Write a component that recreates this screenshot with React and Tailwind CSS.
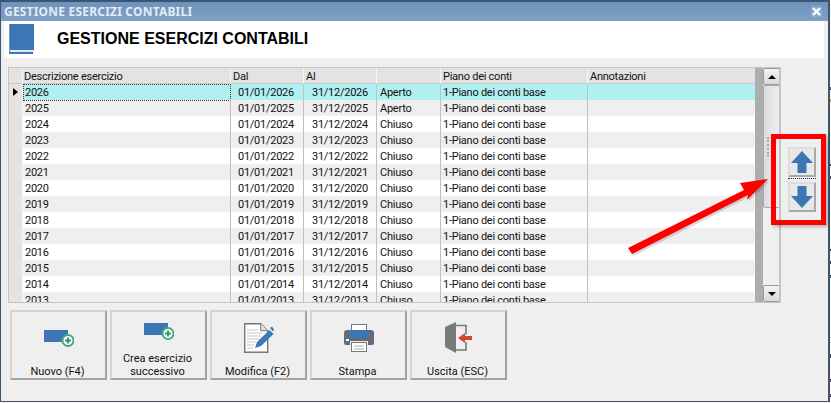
import React from 'react';

const font = { fontFamily: 'Roboto, Tahoma, sans-serif' };

const rows = [
  ['2026', '2026', 'Aperto'],
  ['2025', '2025', 'Aperto'],
  ['2024', '2024', 'Chiuso'],
  ['2023', '2023', 'Chiuso'],
  ['2022', '2022', 'Chiuso'],
  ['2021', '2021', 'Chiuso'],
  ['2020', '2020', 'Chiuso'],
  ['2019', '2019', 'Chiuso'],
  ['2018', '2018', 'Chiuso'],
  ['2017', '2017', 'Chiuso'],
  ['2016', '2016', 'Chiuso'],
  ['2015', '2015', 'Chiuso'],
  ['2014', '2014', 'Chiuso'],
  ['2013', '2013', 'Chiuso'],
];

// bits of the window behind that show past the right edge
const specks = [
  'top-[87px] h-[3px] bg-[#5a3a7a]',
  'top-[99px] h-[3px] bg-[#e0a040]',
  'top-[164px] h-[2px] bg-[#333]',
  'top-[176px] h-[3px] bg-[#2a5a8a]',
  'top-[249px] h-[2px] bg-[#333]',
  'top-[261px] h-[3px] bg-[#5a3a7a]',
  'top-[275px] h-[3px] bg-[#2a6aa8]',
  'top-[337px] h-[1px] bg-[#bbb]',
  'top-[342px] h-[1px] bg-[#bbb]',
  'top-[354px] h-[4px] bg-[#5a3a7a]',
  'top-[379px] h-[3px] bg-[#7a3a7a]',
  'top-[394px] h-[3px] bg-[#7a3a7a]',
];

const BookIcon = () => (
  <svg width="25" height="30" viewBox="0 0 25 30">
    <rect x="0" y="0" width="25" height="30" fill="#dfe7f1" />
    <rect x="1" y="0" width="24" height="26" fill="#3c76b5" />
    <rect x="0" y="0" width="1" height="30" fill="#6f9ac8" />
    <rect x="0" y="28" width="24" height="2" fill="#3c76b5" />
  </svg>
);

const NewIcon = () => (
  <svg width="30" height="17" viewBox="0 0 30 17">
    <rect x="0" y="0" width="24" height="12" fill="#3c76b5" />
    <circle cx="24" cy="10.5" r="5.5" fill="#fff" stroke="#4aa884" strokeWidth="2" />
    <path d="M24 7.5v6M21 10.5h6" stroke="#2f9a72" strokeWidth="2.2" />
  </svg>
);

const EditIcon = () => (
  <svg width="30" height="30" viewBox="0 0 30 30">
    <path d="M0.7 0.7h16l7 7v21.6h-23z" fill="#fff" stroke="#777" strokeWidth="1.4" />
    <path d="M16.7 0.7v7h7" fill="#e4e4e4" stroke="#777" />
    <path d="M3 7h11M3 10h15M3 13h15M3 16h13M3 19h9M3 22h7M3 25h6" stroke="#c6c6c6" />
    <path d="M11 25l2-6L25.500 7l4 4-12.500 12z" fill="#3c76b5" />
    <path d="M26 5l2-1.500 2 3-1 2z" fill="#3c76b5" />
  </svg>
);

const PrinterIcon = () => (
  <svg width="30" height="28" viewBox="0 0 30 28">
    <rect x="7.500" y="0.500" width="15" height="9" fill="#fff" stroke="#777" />
    <path d="M3 6h24a3 3 0 0 1 3 3v10a2 2 0 0 1-2 2h-4v-4H6v4H2a2 2 0 0 1-2-2V9a3 3 0 0 1 3-3z" fill="#666b73" />
    <rect x="5" y="6" width="20" height="8" fill="#3c76b5" />
    <rect x="2" y="15" width="3" height="2" fill="#fff" />
    <rect x="7.500" y="18.500" width="15" height="9" fill="#fff" stroke="#777" />
    <path d="M10 22h10M10 25h10" stroke="#aaa" />
  </svg>
);

const ExitIcon = () => (
  <svg width="27" height="31" viewBox="0 0 27 31">
    <path d="M0 5l11-5v31L0 25z" fill="#7a7a7a" />
    <path d="M11 3.500h10v9M21 20v8H11" fill="none" stroke="#7a7a7a" strokeWidth="1.6" />
    <path d="M13 16l7-5v3h7v4h-7v3z" fill="#d4492f" />
  </svg>
);

const ToolButton = ({ icon, lines, top }) => (
  <button className="w-[97px] h-[70px] bg-[#efefef] border-2 border-t-[#d2d2d2] border-l-[#d2d2d2] border-r-[#a2a2a2] border-b-[#a2a2a2] flex flex-col items-center text-[11px] leading-[13px] text-[#111] pr-[2px]">
    <div className={top}>{icon}</div>
    <div className="mt-auto">
      {lines.map((l) => (
        <div key={l}>{l}</div>
      ))}
    </div>
  </button>
);

const MoveButton = ({ down }) => (
  <div className="w-[28px] h-[30px] bg-[#e8e8e8] border-2 border-t-[#dcdcdc] border-l-[#dcdcdc] border-r-[#a8a8a8] border-b-[#a8a8a8] flex items-center justify-center">
    <svg width="22" height="22" viewBox="0 0 22 22">
      <path d={down ? 'M6.500 0h9v10H22L11 22 0 10h6.500z' : 'M11 0l11 12h-6.500v10h-9V12H0z'} fill="#3c76b5" />
    </svg>
  </div>
);

export default function App() {
  return (
    <div className="w-[831px] h-[403px] bg-[#f8f8f8] overflow-hidden relative text-[#111]" style={font}>
      <div className="w-[830px] h-[402px] border border-[#3d5670] border-t-2 border-r-2 bg-[#efefef] flex flex-col">
        {/* Title bar */}
        <div className="h-[19px] bg-gradient-to-b from-[#6e93bc] to-[#7fa0c6] flex items-center justify-between pl-[3px] pr-[6px] shrink-0">
          <span className="text-[12px] font-bold text-[#e4ecf5] leading-none tracking-[0.2px]" style={{ fontFamily: '"Noto Sans", Tahoma, sans-serif' }}>GESTIONE ESERCIZI CONTABILI</span>
          <span className="w-[11px] h-[11px] bg-white/15 flex items-center justify-center">
            <svg width="9" height="9" viewBox="0 0 9 9">
              <path d="M1 1l7 7M8 1l-7 7" stroke="#fff" strokeWidth="2.4" />
            </svg>
          </span>
        </div>

        {/* Header */}
        <div className="h-[37px] bg-white ml-[3px] mr-[4px] flex items-start shrink-0">
          <div className="ml-[5px] mt-[3px]">
            <BookIcon />
          </div>
          <h1 className="ml-[23px] mt-[8px] text-[16px] leading-[20px] font-bold text-black" style={{ fontFamily: '"Liberation Sans", Arial, sans-serif' }}>
            GESTIONE ESERCIZI CONTABILI
          </h1>
        </div>

        {/* Grid + move buttons */}
        <div className="flex mt-[9px] ml-[7px] shrink-0">
          <div className="w-[773px] h-[236px] border border-[#c4c4c4] border-r-2 bg-white flex overflow-hidden">
            <div className="w-[746px] overflow-hidden text-[11px] tracking-[-0.25px] shrink-0">
              <div className="grid grid-cols-[14px_208px_73px_73px_64px_147px_167px] h-[16px] bg-[#e3e3e3] border-b border-[#c8c8c8] leading-[17px]">
                <div className="border-r border-[#f4f4f4]" />
                <div className="pl-[1px] border-r border-[#f4f4f4]">Descrizione esercizio</div>
                <div className="pl-[2px] border-r border-[#f4f4f4]">Dal</div>
                <div className="pl-[2px] border-r border-[#f4f4f4]">Al</div>
                <div className="border-r border-[#f4f4f4]" />
                <div className="pl-[2px] border-r border-[#f4f4f4]">Piano dei conti</div>
                <div className="pl-[2px]">Annotazioni</div>
              </div>
              {rows.map(([name, y, state], i) => {
                const bg = i === 0 ? 'bg-[#b0f0f0]' : i % 2 === 1 ? 'bg-[#efefef]' : 'bg-white';
                return (
                  <div key={name} className={`grid grid-cols-[14px_208px_73px_73px_64px_147px_167px] h-[16px] leading-[17px] ${bg}`}>
                    <div className="bg-[#e3e3e3] border-b border-[#bdbdbd] border-r border-r-[#f8f8f8] flex items-center justify-center">
                      {i === 0 && <span className="w-0 h-0 border-y-[4px] border-y-transparent border-l-[5px] border-l-black" />}
                    </div>
                    <div className={i === 0 ? 'pl-[1px] border border-dotted border-[#7a2020] leading-[15px]' : 'pl-[2px] border-r border-[#c0c0c0]'}>{name}</div>
                    <div className="text-right pr-[9px] border-r border-[#c0c0c0]">{`01/01/${y}`}</div>
                    <div className="text-right pr-[8px] border-r border-[#c0c0c0]">{`31/12/${y}`}</div>
                    <div className="pl-[3px] border-r border-[#c0c0c0]">{state}</div>
                    <div className="pl-[2px] border-r border-[#c0c0c0]">1-Piano dei conti base</div>
                    <div />
                  </div>
                );
              })}
            </div>
            {/* Scroll bar */}
            <div className="w-[8px] bg-[#adadad] shrink-0" />
            <div className="w-[17px] shrink-0 bg-[#f0f0f0] flex flex-col">
              <div className="h-[17px] bg-gradient-to-b from-[#f4f4f4] to-[#d8d8de] border border-[#9a9a9a] rounded-[2px] flex items-center justify-center shrink-0">
                <span className="w-0 h-0 border-x-[4px] border-x-transparent border-b-[4px] border-b-black" />
              </div>
              <div className="h-[123px] bg-gradient-to-r from-[#dcdce2] to-[#eeeef0] border border-[#a8a8a8] rounded-[2px] shrink-0 flex items-center">
                <div className="ml-[3px] h-[20px] w-[2px] border-l-2 border-dotted border-[#a8a8a8]" />
              </div>
              <div className="flex-1" />
              <div className="h-[17px] bg-gradient-to-b from-[#f4f4f4] to-[#d8d8de] border border-[#9a9a9a] rounded-[2px] flex items-center justify-center shrink-0">
                <span className="w-0 h-0 border-x-[4px] border-x-transparent border-t-[4px] border-t-black" />
              </div>
            </div>
          </div>
          <div className="ml-[7px] mt-[80px] flex flex-col">
            <MoveButton />
            <div className="h-[1px] mt-[1px] mb-[3px] border-t border-dotted border-[#22304a]" />
            <MoveButton down />
          </div>
        </div>

        {/* Toolbar */}
        <div className="flex gap-[3px] mt-[7px] ml-[9px]">
          <ToolButton icon={<NewIcon />} lines={['Nuovo (F4)']} top="pt-[18px] pl-[2px]" />
          <ToolButton icon={<NewIcon />} lines={['Crea esercizio', 'successivo']} top="pt-[11px] pl-[2px]" />
          <ToolButton icon={<EditIcon />} lines={['Modifica (F2)']} top="pt-[11px] pl-[2px]" />
          <ToolButton icon={<PrinterIcon />} lines={['Stampa']} top="pt-[12px] pl-[2px]" />
          <ToolButton icon={<ExitIcon />} lines={['Uscita (ESC)']} top="pt-[10px] pl-[2px]" />
        </div>
      </div>

      {specks.map((c) => (
        <span key={c} className={`absolute left-[830px] w-[1px] ${c}`} />
      ))}

      {/* Red annotation */}
      <div className="absolute left-[771px] top-[134px] w-[55px] h-[91px] border-[5px] border-[#fe0000] shadow-[2px_2px_3px_rgba(0,0,0,0.25)]" />
      <svg className="absolute left-0 top-0 pointer-events-none" width="831" height="403" viewBox="0 0 831 403">
        <path d="M768 179L740 183L744 190L628 248L632 254L748 195L747 200Z" fill="#000" opacity="0.15" transform="translate(1.500 2)" />
        <path d="M768 179L740 183L744 190L628 248L632 254L748 195L747 200Z" fill="#fe0000" />
      </svg>
    </div>
  );
}
